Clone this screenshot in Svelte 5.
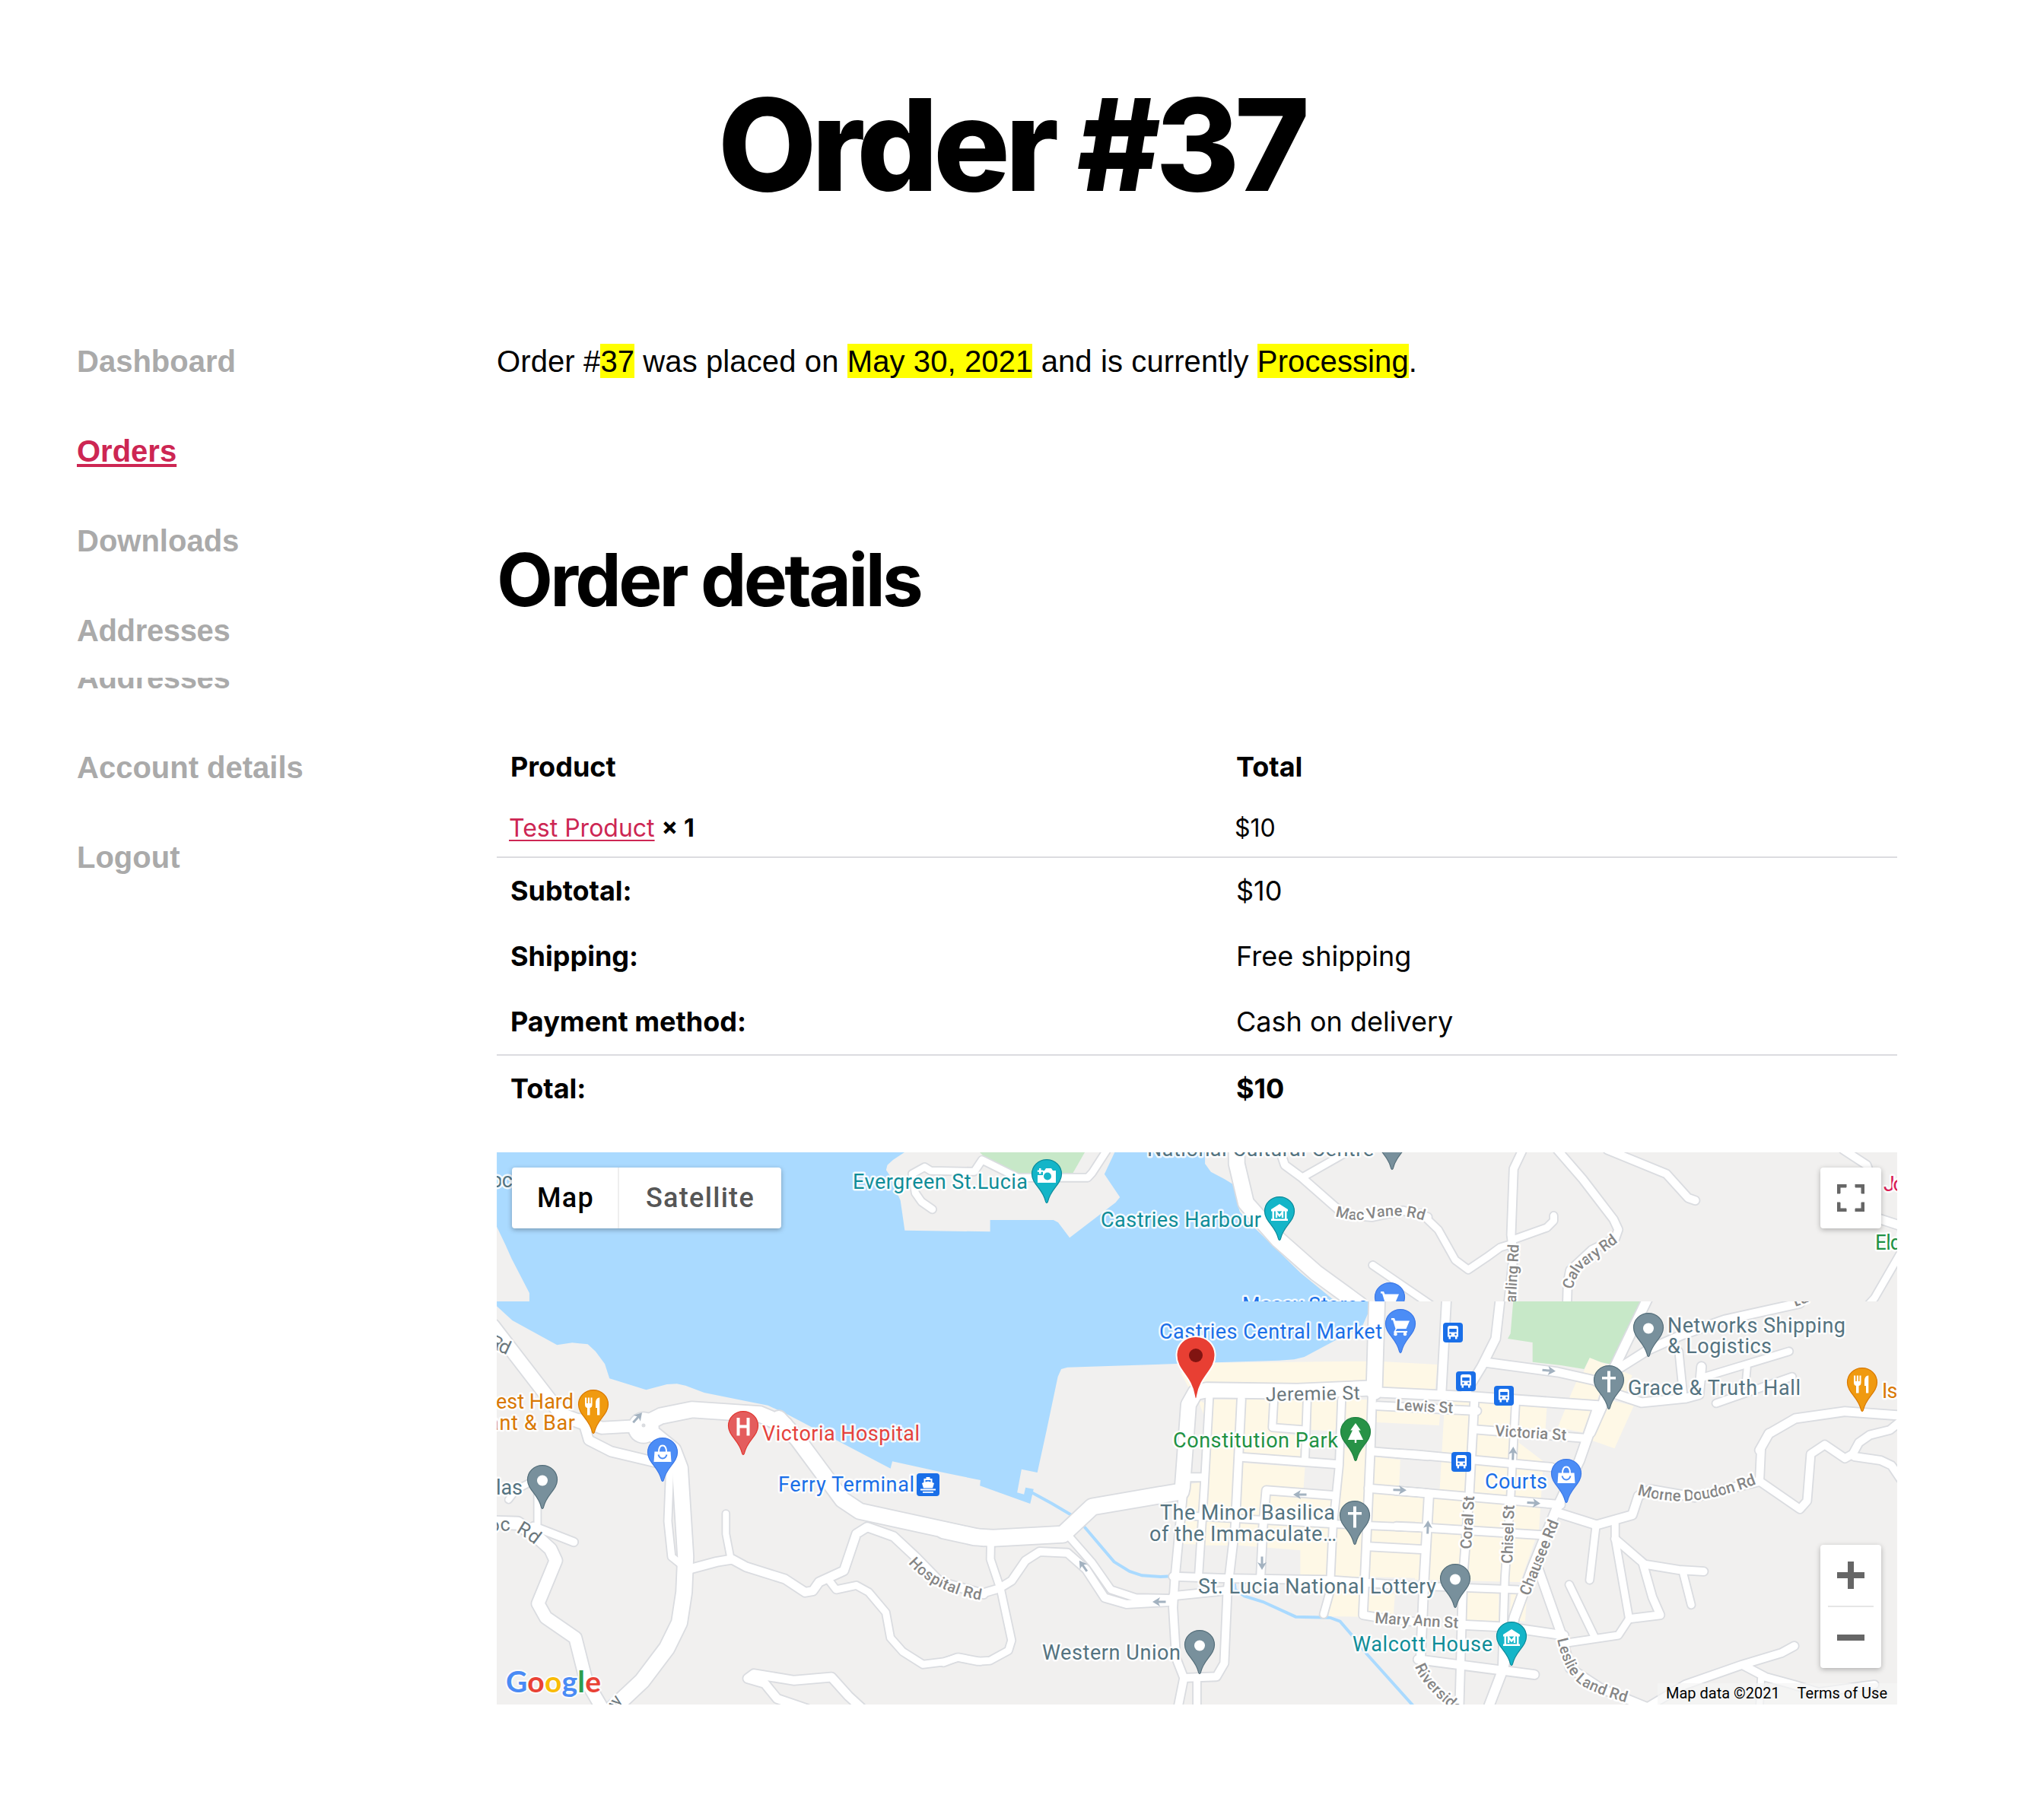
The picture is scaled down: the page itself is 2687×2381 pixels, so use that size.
<script>
  const rows = [
    { label: 'Subtotal:', value: '$10' },
    { label: 'Shipping:', value: 'Free shipping' },
    { label: 'Payment method:', value: 'Cash on delivery', line: true },
    { label: 'Total:', value: '$10', bold: true },
  ];

  // Map geometry is stored per tile; every tile has its own origin and grid.
  const tile = (x, y) => `translate(${x} ${y}) scale(${1 / 2.45} ${1 / 3})`;

  const northTiles = [
    { t: tile(-13, -15), roads: [[9, '1435,270 1400,240 1380,205 1370,130 1410,103 1430,118 1570,121 1595,75 1710,145 1935,145 1950,125 1995,40']] },
    { t: tile(587, -15), roads: [
      [20, '945,30 945,90 975,245 1080,390 1200,520 1340,645'],
      [10, '1085,40 1100,95 1155,145 1290,290 1380,300 1480,275 1560,300'],
      [9, '1155,145 1270,65 1320,30'],
      [9, '1383,490 1568,645'],
    ] },
    { t: tile(1207, -15), roads: [
      [9, '20,285 75,350 130,470 172,508 230,460 275,420 315,405'],
      [10, '345,40 318,110 310,370 318,450 300,650'],
      [9, '315,390 425,342 447,315 447,295'],
      [10, '455,30 540,150 640,310 655,350 645,385 570,430 500,510 492,560 490,645'],
      [10, '620,35 810,130 880,225 903,235'],
      [10, '1380,35 1455,95 1475,160'],
      [11, '1490,305 1565,335'],
      [9, '1570,430 1480,620 1450,660'],
    ] },
  ];

  const southTiles = [
    { t: tile(-13, -15), roads: [
      [17, '20,730 70,810 240,1080 330,1120'],
      [20, '520,1110 560,1085 660,1060 880,1078 960,1120'],
    ] },
    { t: tile(1207, -15), roads: [
      [11, '102,620 85,1000'],
      [11, '275,620 260,780 215,890 160,1000'],
      [11, '225,873 460,912 580,945 640,995 730,1032 870,1015 915,1000 923,890'],
      [12, '-140,990 0,998 200,1010 590,1045'],
      [10, '-120,1045 200,1065'],
      [12, '750,620 640,900 605,1040 565,1150'],
      [11, '640,910 750,825 860,765 1000,705 1240,640'],
      [9, '850,830 865,1010'],
      [9, '930,932 1205,830'],
      [8, '1070,895 1065,960'],
      [9, '970,1035 1215,930'],
      [11, '1580,1085 1385,1067 1225,1095 1140,1155 1110,1220'],
    ] },
    { t: tile(-13, 345), roads: [
      [15, '300,20 370,52 460,46 505,50'],
      [12, '316,50 328,100 400,145 560,192'],
      [20, '940,15 1000,95 1145,335 1200,380 1600,487'],
      [20, '540,80 600,140 622,210 640,560 635,700 620,820 580,920 500,1050 400,1165'],
      [9, '590,200 583,420 595,560 630,595'],
      [8, '135,270 95,295 70,335'],
      [8, '163,300 163,450'],
      [10, '150,440 280,502'],
      [16, '20,425 100,428 160,480 205,530 222,575 165,745 190,800 285,880 320,1050 370,1155'],
      [11, '640,613 740,580 790,570 835,600 960,648 1025,700 1050,695 1070,660 1150,615 1190,470 1225,443 1310,480 1380,560 1460,660 1600,707'],
      [8, '770,390 770,470 785,565'],
      [9, '1103,655 1125,690 1190,673 1230,700 1285,780 1300,880 1340,935 1405,985 1470,975 1520,957 1590,973'],
      [11, '1205,1155 1165,1110 1110,1035 990,1048 860,1022 840,1040 895,1060 935,1120 1030,1160'],
    ] },
    { t: tile(587, 345), roads: [
      [21, '0,455 100,482 160,487 385,472 480,363 765,303'],
      [19, '770,290 790,-40 812,-88 850,-97 1140,-92 1375,-105'],
      [20, '1397,-460 1388,-90'],
      [10, '1382,-90 1376,140 1365,440 1352,790 1400,800 1540,820'],
      [10, '775,270 745,660 740,760 750,960 775,1038 755,1160'],
      [9, '857,-70 840,300 822,640'],
      [10, '960,-60 940,440 915,700 905,980 880,1033 775,1038'],
      [9, '817,1035 817,1160'],
      [10, '790,247 840,247'],
      [9, '1065,-60 1060,50 1165,60'],
      [9, '1172,-60 1165,180'],
      [10, '960,167 1265,195'],
      [10, '1255,318 1040,298 1030,440 1022,640'],
      [9, '780,398 1240,430 1560,447'],
      [9, '1283,-60 1275,200 1255,440 1245,700 1225,787'],
      [10, '740,638 900,645 1240,652 1560,680'],
      [10, '740,715 920,692'],
      [10, '1380,145 1560,163'],
      [10, '1370,290 1560,310'],
      [10, '1370,520 1550,532'],
      [10, '130,703 180,685 220,655 265,575 310,540 400,545 460,610 520,722 590,747 740,737'],
      [9, '405,480 480,585 540,690 620,722 740,725'],
      [9, '0,978 45,957 110,973 150,970 210,930 220,890 185,690 152,570 153,500'],
    ] },
    { t: tile(1207, 345), roads: [
      [10, '192,-60 175,320 155,640 143,1160'],
      [9, '325,-60 308,330 290,640 280,1010'],
      [11, '45,320 30,640 18,970'],
      [11, '10,965 385,1025'],
      [12, '590,-30 530,180 455,375 380,600 320,800 285,1000 235,1160'],
      [10, '190,58 545,92'],
      [10, '-60,152 0,157 440,207'],
      [10, '-60,300 0,305 470,355'],
      [10, '-60,440 0,443 410,475'],
      [9, '0,675 330,690'],
      [11, '140,828 300,838 480,870'],
      [10, '1140,72 1115,130 1110,262 1240,372 1263,340 1275,155 1320,118 1385,172 1410,155 1430,110 1465,80 1530,60 1565,25'],
      [10, '1415,165 1500,180 1535,200 1565,255'],
      [11, '455,385 585,435 700,395 720,320 760,295 900,325 1110,262'],
      [9, '583,440 563,652'],
      [9, '645,430 645,490 690,805 655,870 490,900'],
      [10, '645,490 740,590 850,612 930,618'],
      [9, '862,615 890,750'],
      [10, '735,590 765,720 790,790 690,805'],
      [9, '497,670 580,880'],
      [11, '395,600 470,860 500,1000 600,1080 760,1160'],
      [10, '740,1160 870,1065 1050,988 1180,940 1222,912'],
      [10, '1060,990 1130,1035 1220,1065 1300,1095 1480,1065'],
      [8, '1115,1040 1110,1150'],
    ] },
  ];

  const blocks = [
    [tile(587, -15), '765,915 870,875 1365,869 1425,871 1591,882 1584,980 1400,985 850,985 800,995'],
    [tile(587, 345), '790,275 830,265 820,405 1240,425 1240,650 1150,640 1150,535 950,515 765,510'],
    [tile(587, 345), '868,-60 955,-60 930,515 835,515'],
    [tile(587, 345), '820,-60 850,-40 845,20'],
    [tile(587, 345), '975,-60 1060,-60 1055,65 1150,85 1150,165 960,160'],
    [tile(587, 345), '1075,-60 1165,-60 1160,45 1075,45'],
    [tile(587, 345), '1185,-60 1280,-60 1262,65 1185,60'],
    [tile(587, 345), '965,190 1165,208 1160,295 1040,290 1030,420 945,415'],
    [tile(587, 345), '1045,320 1250,330 1240,425 1040,410'],
    [tile(587, 345), '1290,130 1375,130 1345,797 1242,795 1262,440 1285,-60 1375,-60 1375,60 1290,60'],
    [tile(587, 345), '1395,-25 1600,0 1597,42 1395,30'],
    [tile(587, 345), '1385,165 1472,178 1468,290 1380,280'],
    [tile(587, 345), '1380,305 1560,320 1550,645 1365,640'],
    [tile(587, 345), '1360,700 1455,705 1450,790 1360,780'],
    [tile(1207, 345), '97,-70 425,-30 400,450 340,660 0,650 0,310 80,292'],
    [tile(1207, 345), '165,690 270,700 270,815 165,810'],
    [tile(1207, 345), '310,695 360,725 355,815 305,810'],
    [tile(1207, -15), '520,950 605,965 580,1045 495,1020'],
    [tile(1207, -15), '563,855 700,925 680,990 540,920'],
    [tile(1207, -15), '620,1020 705,1045 643,1213 555,1175'],
    [tile(1207, -15), '460,1130 490,1040 570,1050 540,1150'],
  ];
  const grayBlocks = [
    [tile(1207, 345), '335,75 460,85 430,200 420,190 335,110'],
  ];

  const blue = '#1a6fe8', slate = '#547380', gray = '#858585', teal = '#0f8d98', green = '#1f9244', orange = '#d97800', red = '#e5423c';
  const northLabels = [
    { s: 'oc', x: -8, y: 46, w: 29, c: slate },
    { s: 'Evergreen St.Lucia', x: 468, y: 48, w: 230, c: teal },
    { s: 'Castries Harbour', x: 794, y: 98, w: 211, c: teal },
    { s: 'National Cultural Centre', x: 855, y: 5, w: 298, c: slate },
    { s: 'Massy Stores', x: 980, y: 210, w: 166, c: blue },
    { s: 'Joe', x: 1823, y: 51, w: 40, c: '#d81b55' },
    { s: 'Eldon', x: 1812, y: 128, w: 63, c: green },
    { s: 'Darling Rd', x: 1339, y: 211, w: 90, c: gray, r: -87, f: 20 },
  ];
  const southLabels = [
    { s: 'Castries Central Market', x: 871, y: 245, w: 293, c: blue },
    { s: 'Jeremie St', x: 1011, y: 327, w: 124, c: '#6b777c', r: -1, f: 25, thin: true },
    { s: 'Lewis St', x: 1182, y: 339, w: 75, c: gray, r: 3, f: 20.5 },
    { s: 'Victoria St', x: 1312, y: 373, w: 94, c: gray, r: 3.5, f: 20.5 },
    { s: 'Mary Ann St', x: 1154, y: 619, w: 110, c: gray, r: 3.5, f: 20.5 },
    { s: 'Coral St', x: 1281, y: 522, w: 70, c: gray, r: -86.5, f: 20.5 },
    { s: 'Chisel St', x: 1335, y: 541, w: 77, c: gray, r: -88, f: 20.5 },
    { s: 'Chausee Rd', x: 1357, y: 584, w: 105, c: gray, r: -68, f: 20.5 },
    { s: 'Lu', x: 1707, y: 203, w: 20, c: gray, r: -20, f: 20 },
    { s: 'Networks Shipping', x: 1539, y: 237, w: 234, c: slate },
    { s: '& Logistics', x: 1539, y: 264, w: 137, c: slate },
    { s: 'Grace & Truth Hall', x: 1487, y: 319, w: 227, c: slate },
    { s: 'Island', x: 1821, y: 323, w: 69, c: orange },
    { s: 'Rd', x: -11, y: 255, w: 27, c: '#6b777c', r: 25, f: 25, thin: true },
    { s: 'est Hard', x: -1, y: 337, w: 102, c: orange },
    { s: 'ant & Bar', x: -12, y: 365, w: 115, c: orange },
    { s: 'Victoria Hospital', x: 349, y: 379, w: 207, c: red },
    { s: 'Ferry Terminal', x: 370, y: 446, w: 179, c: blue },
    { s: 'las', x: -1, y: 450, w: 35, c: slate },
    { s: 'wy', x: 152, y: 738, w: 22, c: '#6b777c', r: -52, f: 22, thin: true },
    { s: 'Western Union', x: 717, y: 667, w: 182, c: slate },
    { s: 'Constitution Park', x: 889, y: 388, w: 217, c: green },
    { s: 'The Minor Basilica', x: 872, y: 483, w: 230, c: slate },
    { s: 'of the Immaculate…', x: 858, y: 511, w: 246, c: slate },
    { s: 'St. Lucia National Lottery', x: 922, y: 580, w: 313, c: slate },
    { s: 'Walcott House', x: 1125, y: 656, w: 184, c: teal },
    { s: 'Courts', x: 1299, y: 442, w: 82, c: blue },
  ];
  const curves = [
    { id: 'calvary', s: 'Calvary Rd', d: 'M1414 181 Q1420 155 1437 145 L1478 115', north: true, f: 20, c: gray, w: 90 },
    { id: 'macvane', s: 'Mac Vane Rd', d: 'M1102 84 Q1130 92 1150 87 Q1190 78 1225 92', north: true, f: 20, c: gray, w: 118 },
    { id: 'ocrd', s: 'oc Rd', d: 'M-10 499 L18 497 Q32 500 62 526', f: 25, c: '#6b777c', w: 66, thin: true },
    { id: 'hospital', s: 'Hospital Rd', d: 'M541 540 Q575 580 645 590', f: 20, c: gray, w: 109 },
    { id: 'morne', s: 'Morne Doudon Rd', d: 'M1499 450 Q1545 463 1585 456 Q1625 450 1675 428', f: 20.5, c: gray, w: 161 },
    { id: 'leslie', s: 'Leslie Land Rd', d: 'M1394 640 Q1405 690 1430 703 Q1455 716 1505 729', f: 20, c: gray, w: 133 },
    { id: 'river', s: 'Riverside Rd', d: 'M1207 676 Q1218 708 1280 750', f: 20.5, c: gray },
  ];

  const slatePin = ['#78909c', '#546e7a'], bluePin = ['#4c8df6', '#3b78e7'], tealPin = ['#14b5c8', '#0b8a99'];
  const northPins = [
    { x: 723, y: 9, c: tealPin, i: 'camera' },
    { x: 1029, y: 58, c: tealPin, i: 'museum' },
    { x: 1177, y: -35, c: slatePin, i: 'dot' },
    { x: 1174, y: 171, c: bluePin, i: 'cart' },
  ];
  const southPins = [
    { x: 1188, y: 206, c: bluePin, i: 'cart' },
    { x: 1514, y: 211, c: slatePin, i: 'dot' },
    { x: 1462, y: 280, c: slatePin, i: 'cross' },
    { x: 1795, y: 283, c: ['#f09a10', '#d97800'], i: 'food' },
    { x: 127, y: 312, c: ['#f09a10', '#d97800'], i: 'food' },
    { x: 324, y: 340, c: ['#e45d5d', '#e0362f'], i: 'hospital' },
    { x: 218, y: 375, c: bluePin, i: 'bag' },
    { x: 60, y: 411, c: slatePin, i: 'dot' },
    { x: 1129, y: 348, c: ['#279247', '#1e8040'], i: 'tree' },
    { x: 1128, y: 458, c: slatePin, i: 'cross' },
    { x: 1260, y: 541, c: slatePin, i: 'dot' },
    { x: 1334, y: 617, c: tealPin, i: 'museum' },
    { x: 1406, y: 403, c: bluePin, i: 'bag' },
    { x: 924, y: 628, c: slatePin, i: 'dot' },
  ];
  const buses = [[1257, 237], [1274, 301], [1324, 320], [1268, 407]];
  const arrows = [[185, 349, -48], [1383, 287, 5], [1056, 450, 180], [1187, 444, 2], [1006, 540, 90], [1224, 493, -88], [771, 544, -125], [871, 591, 180], [1336, 396, -88], [1363, 461, 4]];
</script>

{#snippet roads(tiles)}
  {#each tiles as g}
    <g transform={g.t}>{#each g.roads as [w, p]}<polyline class="road casing" points={p} stroke-width={w + 3.6} />{/each}</g>
  {/each}
  {#each tiles as g}
    <g transform={g.t}>{#each g.roads as [w, p]}<polyline class="road fill" points={p} stroke-width={w} />{/each}</g>
  {/each}
{/snippet}

{#snippet label(l)}
  <text class="label" class:street={l.f && !l.thin} transform={`translate(${l.x} ${l.y}) rotate(${l.r ?? 0})`} font-size={l.f ?? 27} fill={l.c} textLength={l.w}>{l.s}</text>
{/snippet}

{#snippet curve(l)}
  <path id={l.id} d={l.d} fill="none" />
  <text class="label" class:street={!l.thin} font-size={l.f} fill={l.c} textLength={l.w}><textPath href={'#' + l.id}>{l.s}</textPath></text>
{/snippet}

{#snippet pin(p)}
  <g transform={`translate(${p.x} ${p.y})`}>
    <path d="M0 .6C-11 .6-19.5 9-19.5 19.5C-19.5 33-5 39-1.7 55Q-1.2 57.6 0 57.6Q1.2 57.6 1.7 55C5 39 19.5 33 19.5 19.5C19.5 9 11 .6 0 .6Z" fill={p.c[0]} stroke={p.c[1]} stroke-width="1.2" />
    {#if p.i === 'dot'}
      <circle cy="20.5" r="7" fill="#fff" />
    {:else if p.i === 'cross'}
      <path d="M-2 7.5h4v7.500h7v3.500h-7v17h-4v-17h-7v-3.500h7z" fill="#fff" />
    {:else if p.i === 'museum'}
      <path d="M0 10L11 17v2.500H-11V17zM-9.500 19h2.500v11h-2.500zM7 19h2.500v11H7zM-11 29.500h22V32H-11z" fill="#fff" />
      <path d="M-4 28v-7.500l4 5 4-5V28" fill="none" stroke="#fff" stroke-width="2.400" />
    {:else if p.i === 'camera'}
      <path d="M-3 15l2-3H6l2 3h4v16h-24V21h7v-6z" fill="#fff" />
      <circle cx="1" cy="22.500" r="5" fill={p.c[0]} />
      <path d="M-10 12h2.500v2.500H-5v2.200h-2.500v2.500H-10v-2.500h-2.200v-2.200h2.200z" fill="#fff" />
    {:else if p.i === 'cart'}
      <path d="M-12 12h4l1.500 3.500H12L7.500 26h-12l-2 3H9v2H-9l2.500-5L-10 14.500h-2z" fill="#fff" />
      <circle cx="-6.500" cy="33" r="2.300" fill="#fff" /><circle cx="6" cy="33" r="2.300" fill="#fff" />
    {:else if p.i === 'food'}
      <path d="M-11 10.500v9q0 4 3 4.500v9.500h3.500V24q3-.5 3-4.500v-9h-2v7.500h-1.500v-7.500h-2.200v7.500h-1.600v-7.500zM7.500 10.500q-4.500 1-4.500 7v6.500h2v9.500h3.300V10.500z" fill="#fff" />
    {:else if p.i === 'hospital'}
      <path d="M-8.500 9h4v9.500h9V9h4v23.500h-4v-10h-9v10h-4z" fill="#fff" />
    {:else if p.i === 'bag'}
      <path d="M-10.500 18.500h21L11.500 32h-23z" fill="#fff" />
      <path d="M-5 19q0-8.500 5-8.500T5 19" fill="none" stroke="#fff" stroke-width="2" />
      <path d="M-5.500 22.500q1.500 5 5.500 5t5.500-5" fill="none" stroke={p.c[0]} stroke-width="2" />
    {:else if p.i === 'tree'}
      <path d="M0 8L6.800 17.500H4L10 30H1.200v4h-2.400v-4H-10L-4 17.500h-2.800z" fill="#fff" />
    {/if}
  </g>
{/snippet}

<main class="page">
  <h1>Order #37</h1>
  <div class="columns">
    <nav>
      <a>Dashboard</a>
      <a class="active">Orders</a>
      <a>Downloads</a>
      <a class="tight">Addresses</a>
      <div class="cut"><a class="tight">Addresses</a></div>
      <a>Account details</a>
      <a>Logout</a>
    </nav>
    <section>
      <p class="intro">Order #<mark>37</mark> was placed on <mark>May 30, 2021</mark> and is currently <mark>Processing</mark>.</p>
      <h2>Order details</h2>
      <div class="table">
        <div class="row head"><b>Product</b><b>Total</b></div>
        <div class="row item line"><span><a>Test Product</a> <b>× 1</b></span><span>$10</span></div>
        {#each rows as r}
          <div class="row" class:line={r.line} class:strong={r.bold}><b>{r.label}</b><span>{r.value}</span></div>
        {/each}
      </div>

      <div class="map">
        <svg class="canvas" viewBox="0 0 1841 726" width="1841" height="726">
          <defs>
            <clipPath id="north"><rect width="1841" height="196" /></clipPath>
            <clipPath id="south"><rect y="196" width="1841" height="530" /></clipPath>
          </defs>
          <g clip-path="url(#north)">
            <rect class="land" width="1841" height="196" />
            <g transform={tile(-13, -15)}>
              <polygon class="water" points="32,45 1345,45 1308,75 1290,95 1286,115 1300,140 1325,215 1332,235 1346,353 1621,358 1621,312 1825,312 1840,322 1877,382 2025,243 2039,222 1989,131 2022,45 2313,45 2313,90 2332,122 2375,150 2402,170 2425,280 2470,340 2620,520 2740,640 137,640 137,600 80,465 60,410 32,338" />
            </g>
            <polygon class="park" points="635,0 773,0 757,28 690,31 640,5" />
            {@render roads(northTiles)}
            {#each northLabels as l}{@render label(l)}{/each}
            {#each curves.filter((c) => c.north) as l}{@render curve(l)}{/each}
            {#each northPins as p}{@render pin(p)}{/each}
          </g>
          <g clip-path="url(#south)">
            <rect class="land" y="196" width="1841" height="530" />
            <g transform={tile(-13, -15)}>
              <polygon class="water" points="32,625 2840,625 2838,680 2820,730 2720,795 2633,852 2600,862 2550,866 2350,874 1870,893 1850,900 1839,930 1803,1140 1773,1308 1722,1295 1708,1387 1730,1394 1735,1367 1761,1373 1750,1431 1588,1360 1590,1338 1470,1308 1306,1264 1300,1292 970,1080 905,1043 855,1031 700,993 640,965 612,958 580,960 513,982 395,937 380,880 350,830 325,802 275,796 226,805 82,708 32,652" />
            </g>
            <g transform={tile(587, 345)}>
              <polyline class="river" points="285,307 350,350 430,408 460,450 550,580 600,618 640,634 700,639 745,636" />
              <polyline class="river" points="938,665 940,690 970,715 1030,738 1135,797 1245,800 1278,815 1320,875 1365,945 1515,1150" />
            </g>
            {#each blocks as [t, p]}<g transform={t}><polygon class="block" points={p} /></g>{/each}
            {#each grayBlocks as [t, p]}<g transform={t}><polygon class="land" points={p} /></g>{/each}
            <g transform={tile(1207, -15)}>
              <polygon class="park" points="317,625 732,625 645,885 600,873 563,855 545,900 470,885 379,872 379,795 299,780 308,760" />
            </g>
            <circle cx="193" cy="362" r="21.500" fill="#dadce0" />
            {@render roads(southTiles)}
            <circle cx="193" cy="362" r="19.700" fill="#fff" />
            <circle cx="193" cy="359" r="2.500" fill="#dadce0" />
            {#each arrows as [x, y, r]}
              <path transform={`translate(${x} ${y}) rotate(${r})`} d="M-8.500-1.500H1L-1-6 9 0-1 6 1 1.500H-8.500z" fill="#a3b2c0" />
            {/each}
            {#each southLabels as l}{@render label(l)}{/each}
            {#each curves.filter((c) => !c.north) as l}{@render curve(l)}{/each}
            {#each buses as [x, y]}
              <g transform={`translate(${x} ${y})`}>
                <rect x="-13" y="-13" width="26" height="26" rx="4" fill={blue} />
                <path d="M-7-6q0-3 3-3h8q3 0 3 3V5.500H5.500V8.500H3V5.500H-3v3H-5.500V5.500H-7z" fill="#fff" />
                <rect x="-4.800" y="-5" width="9.600" height="4.500" fill={blue} />
                <circle cx="-3.500" cy="2.500" r="1.300" fill={blue} /><circle cx="3.500" cy="2.500" r="1.300" fill={blue} />
              </g>
            {/each}
            <g transform="translate(567 437)">
              <rect x="-15" y="-15" width="30" height="30" rx="4" fill={blue} />
              <path d="M-5.500-8h3v-2h5v2h3v5l2.500 1-2 6.500H-6L-8-2l2.500-1zM-10 5.500h20v2H-10zM-7 9h14v1.800H-7z" fill="#fff" />
              <path d="M-3.500-6h7v2.500L0-4.500-3.500-3.500z" fill={blue} />
            </g>
            {#each southPins as p}{@render pin(p)}{/each}
            <g transform="translate(919 241)">
              <path d="M0 1C-15 1-25.500 12-25.500 26C-25.500 46-6 53-2 79Q-1.400 83.500 0 83.500Q1.400 83.500 2 79C6 53 25.500 46 25.500 26C25.500 12 15 1 0 1Z" fill="#e83f33" stroke="#fff" stroke-width="2" />
              <circle cy="26" r="9" fill="#811411" />
            </g>
            <text class="logo" x="12" y="710" textLength="125"><tspan fill="#4a8bf5">G</tspan><tspan fill="#e94235">o</tspan><tspan fill="#f9bb05">o</tspan><tspan fill="#4a8bf5">g</tspan><tspan fill="#2f9e4f">l</tspan><tspan fill="#e94235">e</tspan></text>
          </g>
        </svg>
        <div class="types"><button class="on">Map</button><button>Satellite</button></div>
        <div class="control full">
          <svg width="36" height="36" viewBox="0 0 36 36"><path d="M0 12V0h12v4H4v8zM24 0h12v12h-4V4h-8zM0 24h4v8h8v4H0zM32 24h4v12H24v-4h8z" fill="#666" stroke="#666" /></svg>
        </div>
        <div class="control zoom">
          <svg width="36" height="36" viewBox="0 0 36 36"><path d="M14 0h8v14h14v8H22v14h-8V22H0v-8h14z" fill="#666" /></svg>
          <i></i>
          <svg width="36" height="36" viewBox="0 0 36 36"><path d="M0 14h36v8H0z" fill="#666" /></svg>
        </div>
        <div class="credit"><span>Map data ©2021</span><span>Terms of Use</span></div>
      </div>
    </section>
  </div>
</main>

<style>
  :global(body) { background: #fff; }
  .page { width: 2687px; height: 2381px; overflow: hidden; box-sizing: border-box; padding-top: 100px; color: #000; font-family: Inter, sans-serif; }
  h1 { margin: 0; padding-right: 28px; height: 180px; line-height: 180px; font-size: 168px; font-weight: 800; letter-spacing: -6.5px; text-align: center; }
  .columns { display: grid; grid-template-columns: 552px 1841px; padding: 136px 0 0 101px; }
  nav { display: flex; flex-direction: column; font: bold 40px 'Liberation Sans', sans-serif; }
  nav a { line-height: 118px; color: #aaa; align-self: flex-start; }
  nav .tight { letter-spacing: -0.35px; }
  nav .active { color: #cd2653; text-decoration: underline; text-decoration-thickness: 4px; text-underline-offset: 3px; }
  .cut { height: 59px; margin-top: 3px; overflow: hidden; }
  .cut a { display: block; margin-top: -59px; }
  .intro { margin: 0; font: 40px/118px 'Liberation Sans', sans-serif; letter-spacing: 0.11px; white-space: nowrap; }
  mark { background: #ff0; color: inherit; padding: 1px 0 0; }
  h2 { margin: 168px 0 0; line-height: 120px; font-size: 96px; font-weight: 700; letter-spacing: -3.7px; }
  .table { margin-top: 145px; font-size: 36px; }
  .row { display: grid; grid-template-columns: 954px 1fr; line-height: 86px; }
  .row > * { padding-left: 18px; }
  .row b { font-weight: 700; }
  .head { line-height: 82px; }
  .item { line-height: 77px; font-size: 32px; }
  .item > * { padding-left: 16px; position: relative; top: 1px; }
  .item a { color: #cd2653; text-decoration: underline; text-decoration-thickness: 2px; text-underline-offset: 4px; }
  .line { border-bottom: 2px solid #dcdce0; }
  .strong { font-weight: 700; }
  .map { position: relative; margin-top: 41px; height: 726px; overflow: hidden; font-family: Roboto, sans-serif; }
  .canvas { display: block; }
  .land { fill: #f1f0ef; }
  .water { fill: #aadaff; }
  .park { fill: #c7e8c8; }
  .block { fill: #fef8e6; }
  .river { fill: none; stroke: #aadaff; stroke-width: 4; vector-effect: non-scaling-stroke; }
  .road { fill: none; stroke-linecap: round; stroke-linejoin: round; vector-effect: non-scaling-stroke; }
  .casing { stroke: #dadce0; }
  .fill { stroke: #fff; }
  .label { font-family: Roboto, sans-serif; stroke: #fff; stroke-opacity: 0.85; stroke-width: 5px; stroke-linejoin: round; paint-order: stroke; }
  .street { stroke-opacity: 1; font-weight: 500; }
  .logo { font: 700 39px Lato, sans-serif; stroke: #fff; stroke-opacity: 0.8; stroke-width: 4px; paint-order: stroke; }
  .types { position: absolute; left: 20px; top: 20px; display: flex; width: 354px; height: 80px; border-radius: 4px; background: #fff; box-shadow: 0 2px 6px rgba(0, 0, 0, 0.3); }
  .types button { flex: 1; padding: 0; border: 0; background: none; color: #565656; font: 500 36px Roboto, sans-serif; letter-spacing: 1.3px; }
  .types .on { flex: 0 0 141px; padding-left: 2px; color: #000; border-right: 2px solid #eee; }
  .control { position: absolute; left: 1740px; width: 80px; border-radius: 4px; background: #fff; box-shadow: 0 2px 7px rgba(0, 0, 0, 0.28); display: flex; flex-direction: column; align-items: center; }
  .full { top: 20px; height: 80px; justify-content: center; }
  .zoom { top: 516px; height: 162px; box-sizing: border-box; padding: 22px 0; justify-content: space-between; }
  .zoom i { width: 60px; height: 2px; background: #e6e6e6; }
  .credit { position: absolute; right: 0; bottom: 0; width: 315px; height: 28px; box-sizing: border-box; padding: 0 13px 0 11px; display: flex; justify-content: space-between; font-size: 20px; line-height: 26px; white-space: nowrap; background: rgba(245, 245, 245, 0.7); }
</style>
